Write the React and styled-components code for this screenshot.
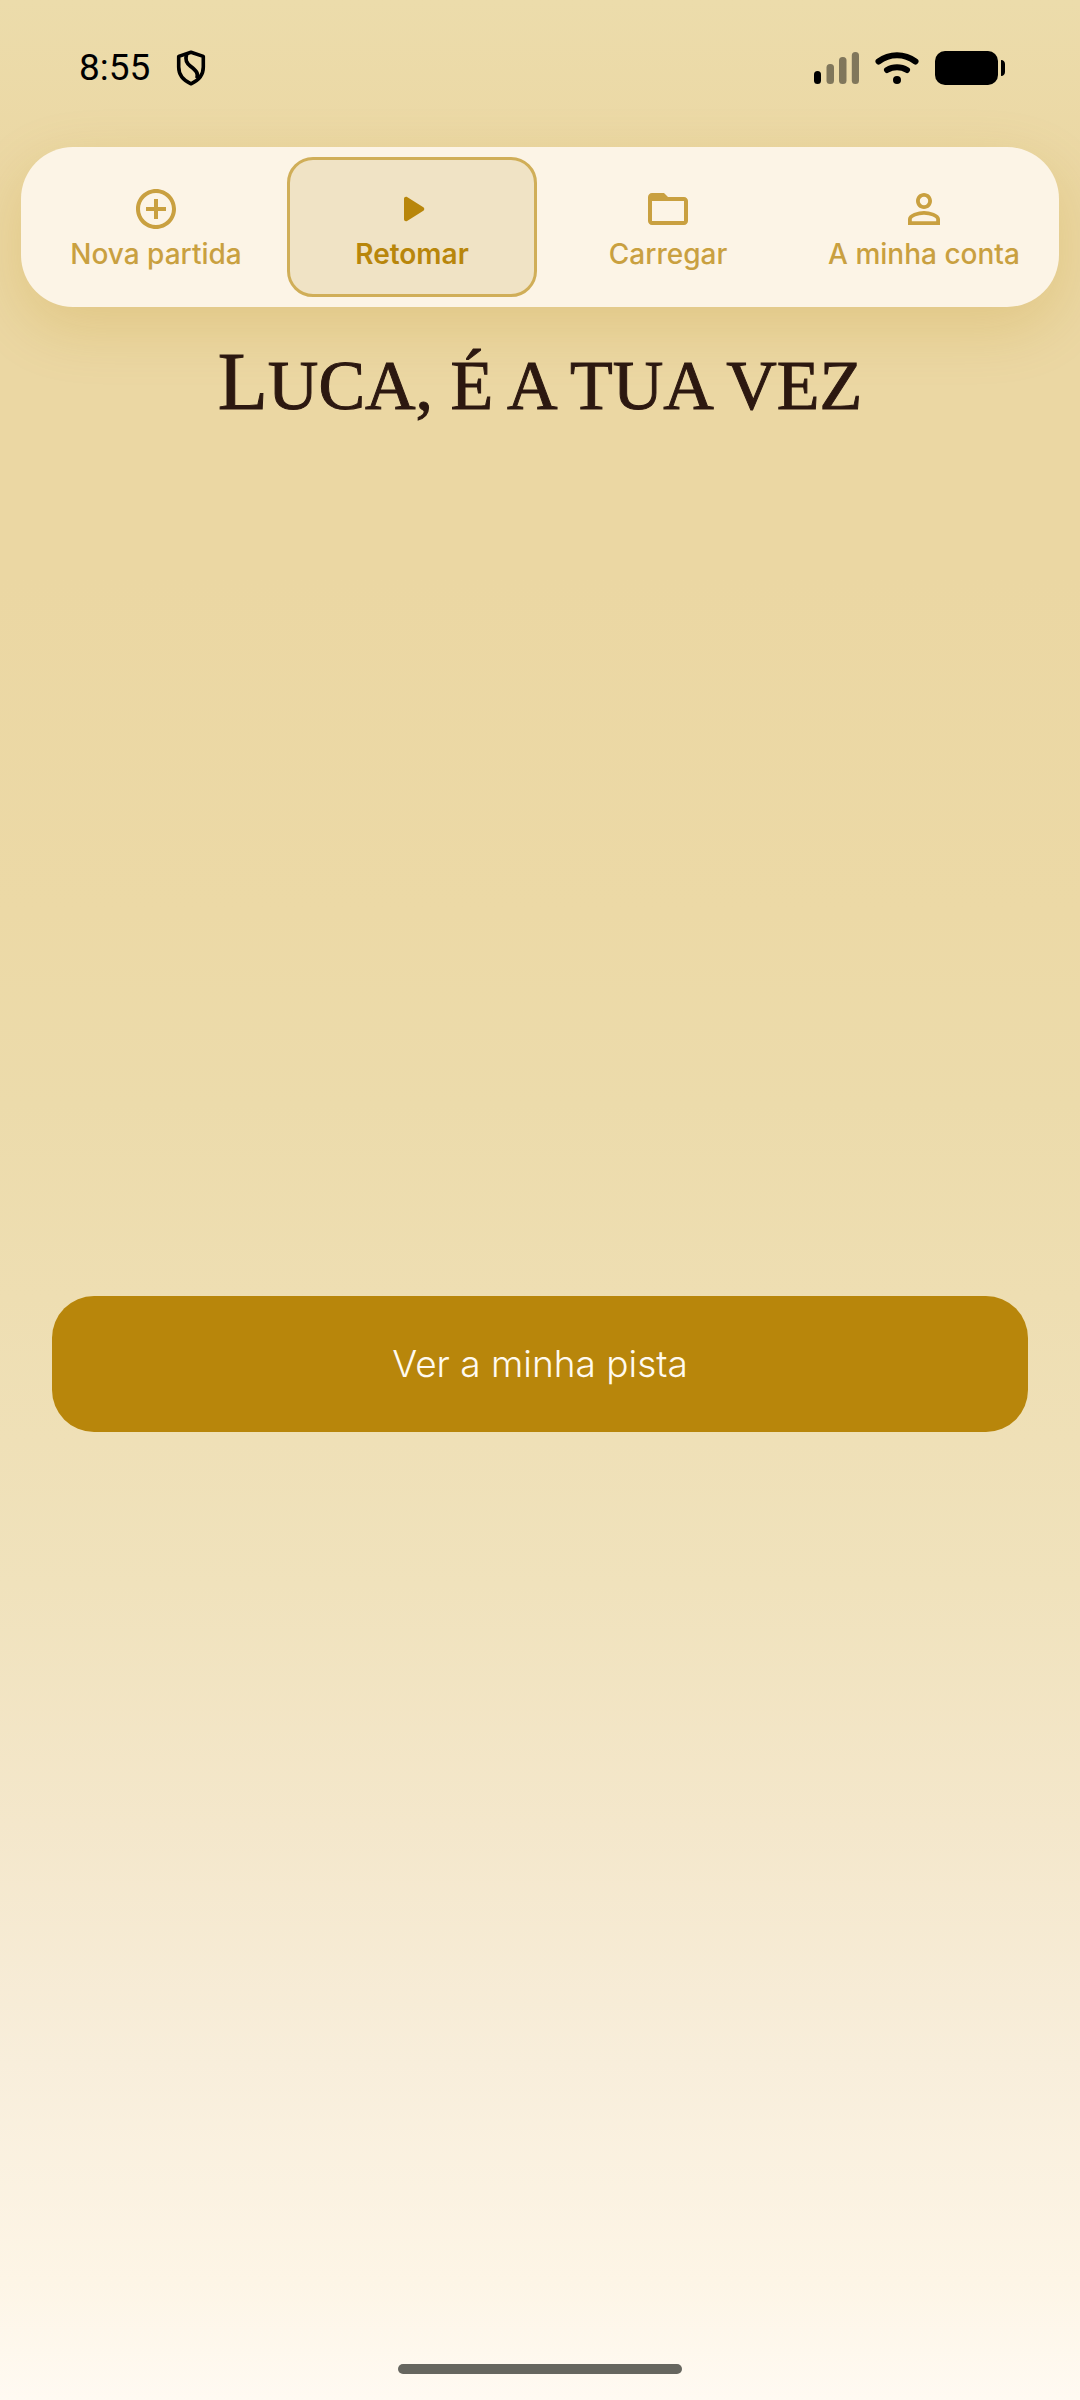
/* eslint-disable react/prop-types */
import { useState } from 'react';
import styled, { createGlobalStyle } from 'styled-components';
import { MdAddCircleOutline, MdFolderOpen, MdPersonOutline } from 'react-icons/md';

const GOLD = '#b8860b';

const PlayIcon = () => (
  <svg viewBox="0 0 24 24" fill="currentColor" aria-hidden="true">
    <path d="M8 6.82v10.36c0 .79.87 1.27 1.54.84l8.14-5.18c.62-.39.62-1.29 0-1.69L9.54 5.98C8.87 5.55 8 6.03 8 6.82z" />
  </svg>
);

const ShieldIcon = () => (
  <svg width="30" height="36" viewBox="0 0 30 36" fill="none" aria-hidden="true">
    <path
      d="M15 2.2 27.3 6.4V17c0 7.6-5 13.6-12.3 16.8C7.7 30.6 2.7 24.6 2.7 17V6.4z"
      stroke="#000"
      strokeWidth="3.6"
      strokeLinejoin="round"
    />
    <path
      d="M10.500 4.500c-1.500 5.500-.3 8.500 4 11.800 5.800 4.400 8 7 6.500 12"
      stroke="#000"
      strokeWidth="3.800"
    />
  </svg>
);

const SignalIcon = () => (
  <svg width="45" height="32" viewBox="0 0 45 32" aria-hidden="true">
    <rect x="0" y="19" width="7" height="13" rx="3.500" />
    <g opacity=".45">
      <rect x="12.500" y="12" width="7.500" height="20" rx="3.500" />
      <rect x="25" y="5" width="7.500" height="27" rx="3.500" />
      <rect x="37.800" y="0" width="7.200" height="32" rx="3.500" />
    </g>
  </svg>
);

const WifiIcon = () => (
  <svg width="44" height="32" viewBox="0 0 44 32" fill="none" aria-hidden="true">
    <g stroke="#000" strokeWidth="6" strokeLinecap="round">
      <path d="M3.500 9.500C14.500 1.200 29.500 1.200 40.500 9.500" />
      <path d="M12 18C18 14.200 26 14.200 32 18" />
    </g>
    <circle cx="22" cy="28" r="4" fill="#000" />
  </svg>
);

const BatteryIcon = () => (
  <svg width="70" height="34" viewBox="0 0 70 34" aria-hidden="true">
    <rect width="63" height="34" rx="10" />
    <path d="M66 9c2.700 0 4 2 4 4v8c0 2-1.300 4-4 4z" />
  </svg>
);

const menus = [
  { id: 'new', label: 'Nova partida', icon: <MdAddCircleOutline /> },
  { id: 'resume', label: 'Retomar', icon: <PlayIcon /> },
  { id: 'load', label: 'Carregar', icon: <MdFolderOpen /> },
  { id: 'account', label: 'A minha conta', icon: <MdPersonOutline /> },
];

const App = () => {
  const [current, setCurrent] = useState('resume');

  return (
    <>
      <GlobalStyle />
      <SPage>
        <SStatusBar>
          <SStatusGroup $gap={26}>
            <time>8:55</time>
            <ShieldIcon />
          </SStatusGroup>
          <SStatusGroup $gap={16}>
            <SignalIcon />
            <WifiIcon />
            <BatteryIcon />
          </SStatusGroup>
        </SStatusBar>

        <SNav>
          {menus.map((menu) => (
            <SNavButton
              key={menu.id}
              type="button"
              $active={current === menu.id}
              onClick={() => setCurrent(menu.id)}
            >
              {menu.icon}
              {menu.label}
            </SNavButton>
          ))}
        </SNav>

        <STitle>Luca, é a tua vez</STitle>
        <SMain>
          <SClueButton type="button">Ver a minha pista</SClueButton>
        </SMain>
        <SFooter>
          <div className="home_bar"></div>
        </SFooter>
      </SPage>
    </>
  );
};

const GlobalStyle = createGlobalStyle`
  * {
    box-sizing: border-box;
  }
  body {
    margin: 0;
  }
  button {
    font-family: inherit;
    cursor: pointer;
  }
`;

const SPage = styled.div`
  display: flex;
  flex-direction: column;
  min-height: 100vh;
  font-family: Inter, 'Open Sans', sans-serif;
  background: linear-gradient(
    #ecdcab 0%,
    #ebd7a3 8%,
    #ebd7a3 24%,
    #ecd9a6 38%,
    #ecdbab 46%,
    #eedeb2 54%,
    #f0e2bc 66%,
    #f4e7cb 76%,
    #f8eedb 86%,
    #fdf5e6 95%,
    #fffaf2 100%
  );
`;

const SStatusBar = styled.header`
  display: flex;
  justify-content: space-between;
  height: 147px;
  padding: 46px 75px 0 79px;
`;

const SStatusGroup = styled.div`
  display: flex;
  align-items: center;
  gap: ${({ $gap }) => $gap}px;
  height: 44px;
  font-family: Roboto, sans-serif;
  font-size: 37px;
  line-height: 44px;
`;

const SNav = styled.nav`
  display: grid;
  grid-template-columns: repeat(4, 1fr);
  gap: 6px;
  margin: 0 21px;
  padding: 10px;
  border-radius: 52px;
  background: #fcf4e6;
  box-shadow: 0 20px 60px rgba(184, 134, 11, 0.2);
`;

const SNavButton = styled.button`
  display: flex;
  flex-direction: column;
  align-items: center;
  gap: 2px;
  padding: 25px 0 21px;
  border: 3px solid ${({ $active }) => ($active ? '#d0ae58' : 'transparent')};
  border-radius: 26px;
  background: ${({ $active }) => ($active ? '#f0e3c5' : 'transparent')};
  color: ${({ $active }) => ($active ? GOLD : '#c9a040')};
  font-size: 28px;
  font-weight: ${({ $active }) => ($active ? 600 : 500)};
  line-height: 38px;
  white-space: nowrap;

  svg {
    width: 48px;
    height: 48px;
  }
`;

const STitle = styled.h1`
  margin: 29px 24px 0;
  color: #2c1810;
  font-family: 'Liberation Serif', serif;
  font-size: 70px;
  font-weight: 400;
  line-height: 92px;
  text-align: center;
  text-transform: uppercase;
  -webkit-text-stroke: 1px #2c1810;

  &::first-letter {
    font-size: 82px;
  }
`;

const SMain = styled.main`
  display: flex;
  flex: 1;
  align-items: center;
  padding: 0 52px;
`;

const SClueButton = styled.button`
  width: 100%;
  padding: 44px 24px;
  border: none;
  border-radius: 42px;
  background: ${GOLD};
  color: #fffaf0;
  font-size: 37px;
  font-weight: 300;
  line-height: 48px;
`;

const SFooter = styled.footer`
  display: flex;
  justify-content: center;
  align-items: flex-end;
  height: 105px;
  padding-bottom: 26px;

  .home_bar {
    width: 284px;
    height: 10px;
    border-radius: 5px;
    background: #66665f;
  }
`;

export default App;
